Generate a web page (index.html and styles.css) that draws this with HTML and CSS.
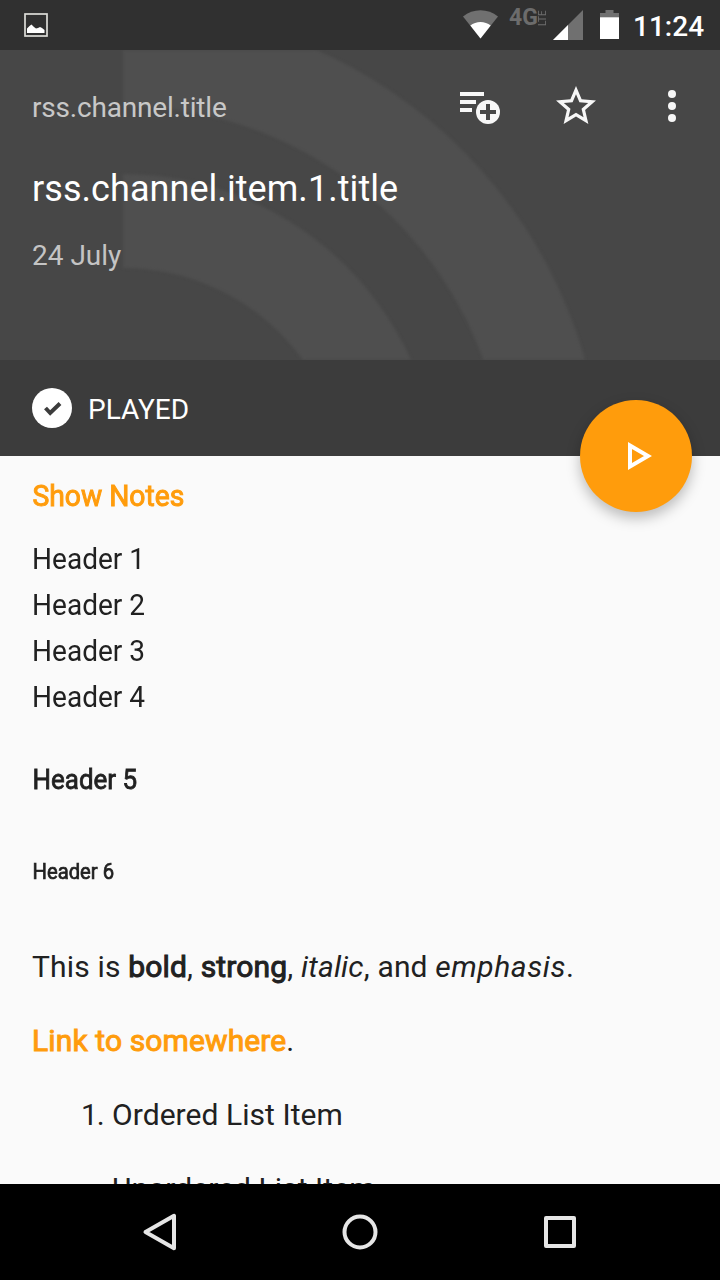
FILE: index.html
```html
<!DOCTYPE html>
<html lang="en">
<head>
<meta charset="utf-8">
<title>rss.channel.item.1.title</title>
<link rel="stylesheet" href="styles.css">
</head>
<body>
<div class="screen">
  <div class="status">
    <svg class="shot" width="24" height="24" viewBox="0 0 24 24"><rect x="1" y="1" width="22" height="22" fill="none" stroke="#dcdcd8" stroke-width="1.7"/><path d="M3 20V15.500L5.500 13L7.500 11.500L10 14L12 15.500L14 15L16 14L18 15L20.500 17V20Z" fill="#fff"/></svg>
    <svg class="wifi" width="35" height="29" viewBox="0 0 35 29"><path d="M0 6.500C10 -1.800 25 -1.800 35 6.500L17.500 28.500Z" fill="#707070"/><path d="M7.300 15.500C13 10.800 22 10.800 27.700 15.500L17.500 28.500Z" fill="#fff"/></svg>
    <div class="network"><span class="gen">4G</span><span class="lte">LTE</span></div>
    <svg class="signal" width="30" height="30" viewBox="0 0 30 30"><path d="M30 0V30H0Z" fill="#707070"/><path d="M15 15V30H0Z" fill="#fff"/></svg>
    <svg class="battery" width="20" height="29" viewBox="0 0 20 29"><path d="M5.500 0h8v3H19v5H0V3h5.500Z" fill="#707070"/><path d="M0 7.300h19v21.700H0Z" fill="#fff"/></svg>
    <span class="clock">11:24</span>
  </div>
  <header class="hero">
    <svg class="art" width="720" height="310" viewBox="0 50 720 310"><g fill="#4f4f4f"><path d="M123 9A481 481 0 0 1 603 490H506A384 384 0 0 0 123 106Z"/><path d="M123 174A316 316 0 0 1 439 490H345A222 222 0 0 0 123 268Z"/></g></svg>
    <div class="toolbar">
      <span class="channel">rss.channel.title</span>
      <svg class="queue" width="40" height="32" viewBox="0 0 40 32"><g fill="#f7f7f7"><path d="M0 0H24V4H0ZM0 8H16V12H0ZM0 16H12V20H0Z"/><circle cx="28" cy="20" r="12"/></g><path d="M28 12V28M20 20H36" stroke="#474747" stroke-width="4"/></svg>
      <svg class="star" width="40" height="38" viewBox="2 2 20 19"><path d="M22 9.240l-7.190-.62L12 2 9.190 8.630 2 9.240l5.460 4.730L5.820 21 12 17.270 18.180 21l-1.630-7.030L22 9.240zM12 15.400l-3.760 2.270 1-4.280-3.320-2.880 4.380-.38L12 6.100l1.710 4.040 4.380.38-3.320 2.880 1 4.280L12 15.400z" fill="#f7f7f7"/></svg>
      <svg class="more" width="8" height="32" viewBox="0 0 8 32" fill="#f7f7f7"><circle cx="4" cy="4" r="4"/><circle cx="4" cy="16" r="4"/><circle cx="4" cy="28" r="4"/></svg>
    </div>
    <h1 class="title">rss.channel.item.1.title</h1>
    <div class="date">24 July</div>
  </header>
  <div class="played">
    <svg width="40" height="40" viewBox="0 0 40 40"><circle cx="20" cy="20" r="20" fill="#fff"/><path d="M13.500 20L18.200 25L28 15.500" fill="none" stroke="#3c3c3c" stroke-width="4"/></svg>
    <span class="label">PLAYED</span>
    <div class="fab"><svg width="24" height="28" viewBox="0 0 24 28"><path d="M2 3.500V24.500L20 14Z" fill="none" stroke="#fff" stroke-width="4"/></svg></div>
  </div>
  <main class="notes">
    <h2 class="section">Show Notes</h2>
    <div class="head">Header 1</div>
    <div class="head">Header 2</div>
    <div class="head">Header 3</div>
    <div class="head">Header 4</div>
    <h5 class="head5">Header 5</h5>
    <h6 class="head6">Header 6</h6>
    <p class="para">This is <b>bold</b>, <b>strong</b>, <i>italic</i>, and <i class="em">emphasis</i>.</p>
    <p class="para"><a class="link">Link to somewhere</a>.</p>
    <div class="item"><span class="num">1.</span><span>Ordered List Item</span></div>
    <div class="item"><span class="num"></span><span>Unordered List Item</span></div>
  </main>
  <nav class="nav">
    <svg width="40" height="40" viewBox="0 0 40 40"><path d="M5.500 20L34 3.800V36.200Z"/></svg>
    <svg width="40" height="40" viewBox="0 0 40 40"><circle cx="20" cy="20" r="15.500"/></svg>
    <svg width="40" height="40" viewBox="0 0 40 40"><rect x="6" y="6" width="28" height="28"/></svg>
  </nav>
</div>
</body>
</html>
```
FILE: styles.css
```css
body { margin: 0; font-family: Roboto, sans-serif; }
h1, h2, h5, h6, p { margin: 0; font-weight: 400; }
svg { display: block; flex: none; }
.screen { width: 720px; height: 1280px; display: flex; flex-direction: column; overflow: hidden; background: #fafafa; }
.status { height: 50px; flex: none; box-sizing: border-box; padding: 0 16px 0 24px; display: flex; align-items: flex-start; background: #303030; }
.shot { margin-top: 13px; margin-right: auto; }
.wifi { margin-top: 10px; margin-right: 11px; }
.network { display: flex; width: 38px; margin-top: 7px; margin-right: 6px; color: #6c6c6c; }
.gen { font-size: 23px; line-height: 22px; font-weight: 700; width: 29px; }
.lte { writing-mode: vertical-rl; transform: rotate(180deg); font-size: 10px; line-height: 9px; height: 19px; }
.signal { margin-top: 10px; margin-right: 17px; }
.battery { margin-top: 10px; margin-right: 13px; }
.clock { font-size: 28px; line-height: 54px; font-weight: 500; color: #fff; width: 71px; white-space: nowrap; }
.hero { position: relative; height: 310px; flex: none; background: #474747; color: #fff; overflow: hidden; }
.art { position: absolute; left: 0; top: 0; filter: blur(1.5px); }
.toolbar { position: relative; height: 112px; padding: 0 44px 0 32px; display: flex; align-items: center; }
.channel { flex: 1; font-size: 28px; line-height: 40px; color: #c8c8c8; margin-top: 3px; letter-spacing: -.19px; }
.queue { margin-top: 4px; }
.star { margin: -2px 72px 0 56px; }
.title { position: relative; padding-left: 32px; font-size: 36px; line-height: 54px; letter-spacing: .06px; }
.date { position: relative; padding: 21px 0 0 32px; font-size: 28px; line-height: 38px; color: #c4c4c4; }
.played { position: relative; height: 96px; flex: none; box-sizing: border-box; padding-left: 32px; display: flex; align-items: center; gap: 16px; background: #3c3c3c; color: #fff; }
.label { font-size: 28px; line-height: 40px; padding-top: 4px; }
.fab { position: absolute; right: 28px; top: 40px; width: 112px; height: 112px; box-sizing: border-box; padding-left: 7px; border-radius: 50%; display: flex; align-items: center; justify-content: center; background: #ff9c0c; box-shadow: 0 6px 14px rgba(0,0,0,.26); }
.notes { flex: 1; min-height: 0; overflow: hidden; padding-left: 32px; color: #212121; font-size: 30px; }
.section, .head, .head5, .head6 { width: max-content; transform-origin: 0 0; }
.section { color: #ff9c0c; font-size: 30px; line-height: 46px; padding: 17px 0; text-indent: .5px; transform: scaleX(.942); -webkit-text-stroke: 1px; }
.head { line-height: 46px; transform: scaleX(.935); }
.head5 { font-size: 28px; line-height: 46px; padding: 37px 0 46px; text-indent: .5px; transform: scaleX(.928); -webkit-text-stroke: .8px; }
.head6 { font-size: 22px; line-height: 46px; padding-bottom: 49px; text-indent: .5px; transform: scaleX(.92); -webkit-text-stroke: .7px; }
.para { line-height: 46px; padding-bottom: 28px; letter-spacing: .16px; }
.para b, .link { font-weight: 400; -webkit-text-stroke: 1px; }
.para .em { letter-spacing: .55px; }
.link { color: #ff9c0c; letter-spacing: .12px; }
.item { display: flex; line-height: 46px; padding-bottom: 28px; letter-spacing: .06px; }
.num { width: 31px; padding-left: 49px; letter-spacing: -1px; }
.nav { height: 96px; flex: none; display: flex; align-items: center; justify-content: center; gap: 160px; background: #000; }
.nav svg { fill: none; stroke: #e6e6e6; stroke-width: 4; stroke-linejoin: round; }
```
